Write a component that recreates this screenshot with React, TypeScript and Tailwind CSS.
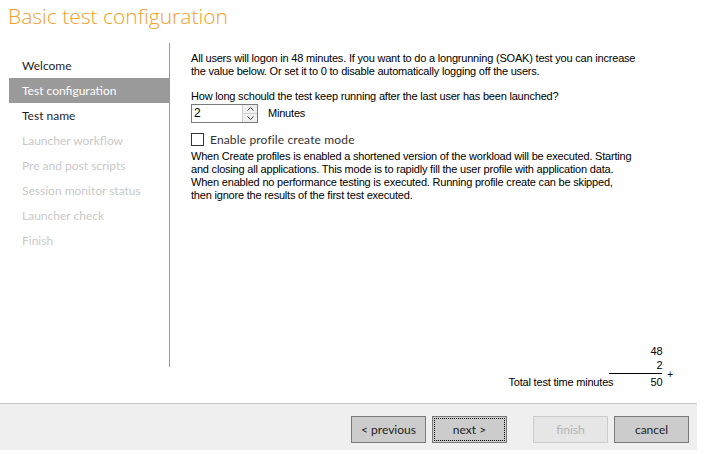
import React from "react";

const ui = { fontFamily: 'Lato, "Noto Sans", sans-serif' };
const ms = { fontFamily: '"Liberation Sans", Arial, sans-serif' };

const items: { label: string; state: "normal" | "selected" | "disabled" }[] = [
  { label: "Welcome", state: "normal" },
  { label: "Test configuration", state: "selected" },
  { label: "Test name", state: "normal" },
  { label: "Launcher workflow", state: "disabled" },
  { label: "Pre and post scripts", state: "disabled" },
  { label: "Session monitor status", state: "disabled" },
  { label: "Launcher check", state: "disabled" },
  { label: "Finish", state: "disabled" },
];

export default function App() {
  return (
    <div className="w-[707px] h-[454px] bg-white flex flex-col overflow-hidden">
      <div
        className="h-[43px] pl-[8px] pt-[1px] text-[21px] leading-[30px] text-[#f2a02a]"
        style={{ fontFamily: '"Open Sans", "Noto Sans", sans-serif', fontWeight: 350 }}
      >
        Basic test configuration
      </div>
      <div className="flex h-[360px]">
        <div className="w-[170px] pl-[9px] h-[324px] shrink-0">
          <div className="h-full border-r border-[#9a9a9a] pt-[10px]" style={ui}>
            {items.map((it) => (
              <div
                key={it.label}
                className={
                  "h-[25px] flex items-center pl-[13px] text-[12px] " +
                  (it.state === "selected"
                    ? "bg-[#9a9a9a] text-white"
                    : it.state === "disabled"
                    ? "text-[#c9c9c9]"
                    : "text-[#1e1e1e]")
                }
              >
                {it.label}
              </div>
            ))}
          </div>
        </div>
        <div
          className="flex-1 flex flex-col pl-[21px] text-[11px] leading-[13px] tracking-[-0.2px] text-black"
          style={ms}
        >
          <p className="mt-[9px]">
            All users will logon in 48 minutes. If you want to do a longrunning (SOAK) test you can increase
            <br />
            the value below. Or set it to 0 to disable automatically logging off the users.
          </p>
          <p className="mt-[12px]">How long schould the test keep running after the last user has been launched?</p>
          <div className="mt-[1px] flex items-center">
            <div className="w-[67px] h-[19px] border border-[#7a7a7a] flex">
              <div className="flex-1 pl-[2px] text-[12px] leading-[17px]">2</div>
              <div className="w-[15px] h-full flex flex-col border-l border-[#cfcfcf] bg-[#f0f0f0]">
                <div className="flex-1 flex items-center justify-center border-b border-[#cfcfcf]">
                  <svg width="7" height="4" viewBox="0 0 7 4">
                    <path d="M0.5 3.5 L3.5 0.5 L6.5 3.5" fill="none" stroke="#333" strokeWidth="1" />
                  </svg>
                </div>
                <div className="flex-1 flex items-center justify-center">
                  <svg width="7" height="4" viewBox="0 0 7 4">
                    <path d="M0.5 0.5 L3.5 3.5 L6.5 0.5" fill="none" stroke="#333" strokeWidth="1" />
                  </svg>
                </div>
              </div>
            </div>
            <span className="ml-[10px]">Minutes</span>
          </div>
          <div className="mt-[10px] flex items-center">
            <div className="w-[13px] h-[13px] border border-[#333] bg-white" />
            <span className="ml-[6px] text-[12px] tracking-[0.15px] font-normal text-[#333]" style={ui}>
              Enable profile create mode
            </span>
          </div>
          <p className="mt-[4px]">
            When Create profiles is enabled a shortened version of the workload will be executed. Starting
            <br />
            and closing all applications. This mode is to rapidly fill the user profile with application data.
            <br />
            When enabled no performance testing is executed. Running profile create can be skipped,
            <br />
            then ignore the results of the first test executed.
          </p>
          <div className="flex-1" />
          <div className="flex justify-end pr-[34px] mb-[14px]">
            <div className="flex items-end">
              <span className="mr-[-4px] leading-[14px]">Total test time minutes</span>
              <div className="w-[53px] text-right leading-[14px]">
                <div>48</div>
                <div>2</div>
                <div className="border-t border-black mt-[1px] pt-[1px]">50</div>
              </div>
              <span className="ml-[5px] mb-[9px] text-[10px] leading-[10px]">+</span>
            </div>
          </div>
        </div>
      </div>
      <div
        className="w-[697px] h-[47px] bg-[#efefef] border-t border-[#c8c8c8] flex pt-[12px] text-[12px]"
        style={ui}
      >
        <button className="ml-[351px] w-[75px] h-[27px] bg-[#cccccc] border border-[#7a7a7a] text-[#1e1e1e]">
          &lt; previous
        </button>
        <button className="ml-[6px] w-[75px] h-[27px] bg-[#cccccc] border border-[#7a7a7a] text-[#1e1e1e] p-[1px]">
          <div className="w-full h-full border border-dotted border-black flex items-center justify-center">
            next &gt;
          </div>
        </button>
        <button className="ml-[26px] w-[75px] h-[27px] bg-[#e6e6e6] border border-[#cccccc] text-[#b4b4b4]">
          finish
        </button>
        <button className="ml-[6px] w-[75px] h-[27px] bg-[#cccccc] border border-[#7a7a7a] text-[#1e1e1e]">
          cancel
        </button>
      </div>
    </div>
  );
}
